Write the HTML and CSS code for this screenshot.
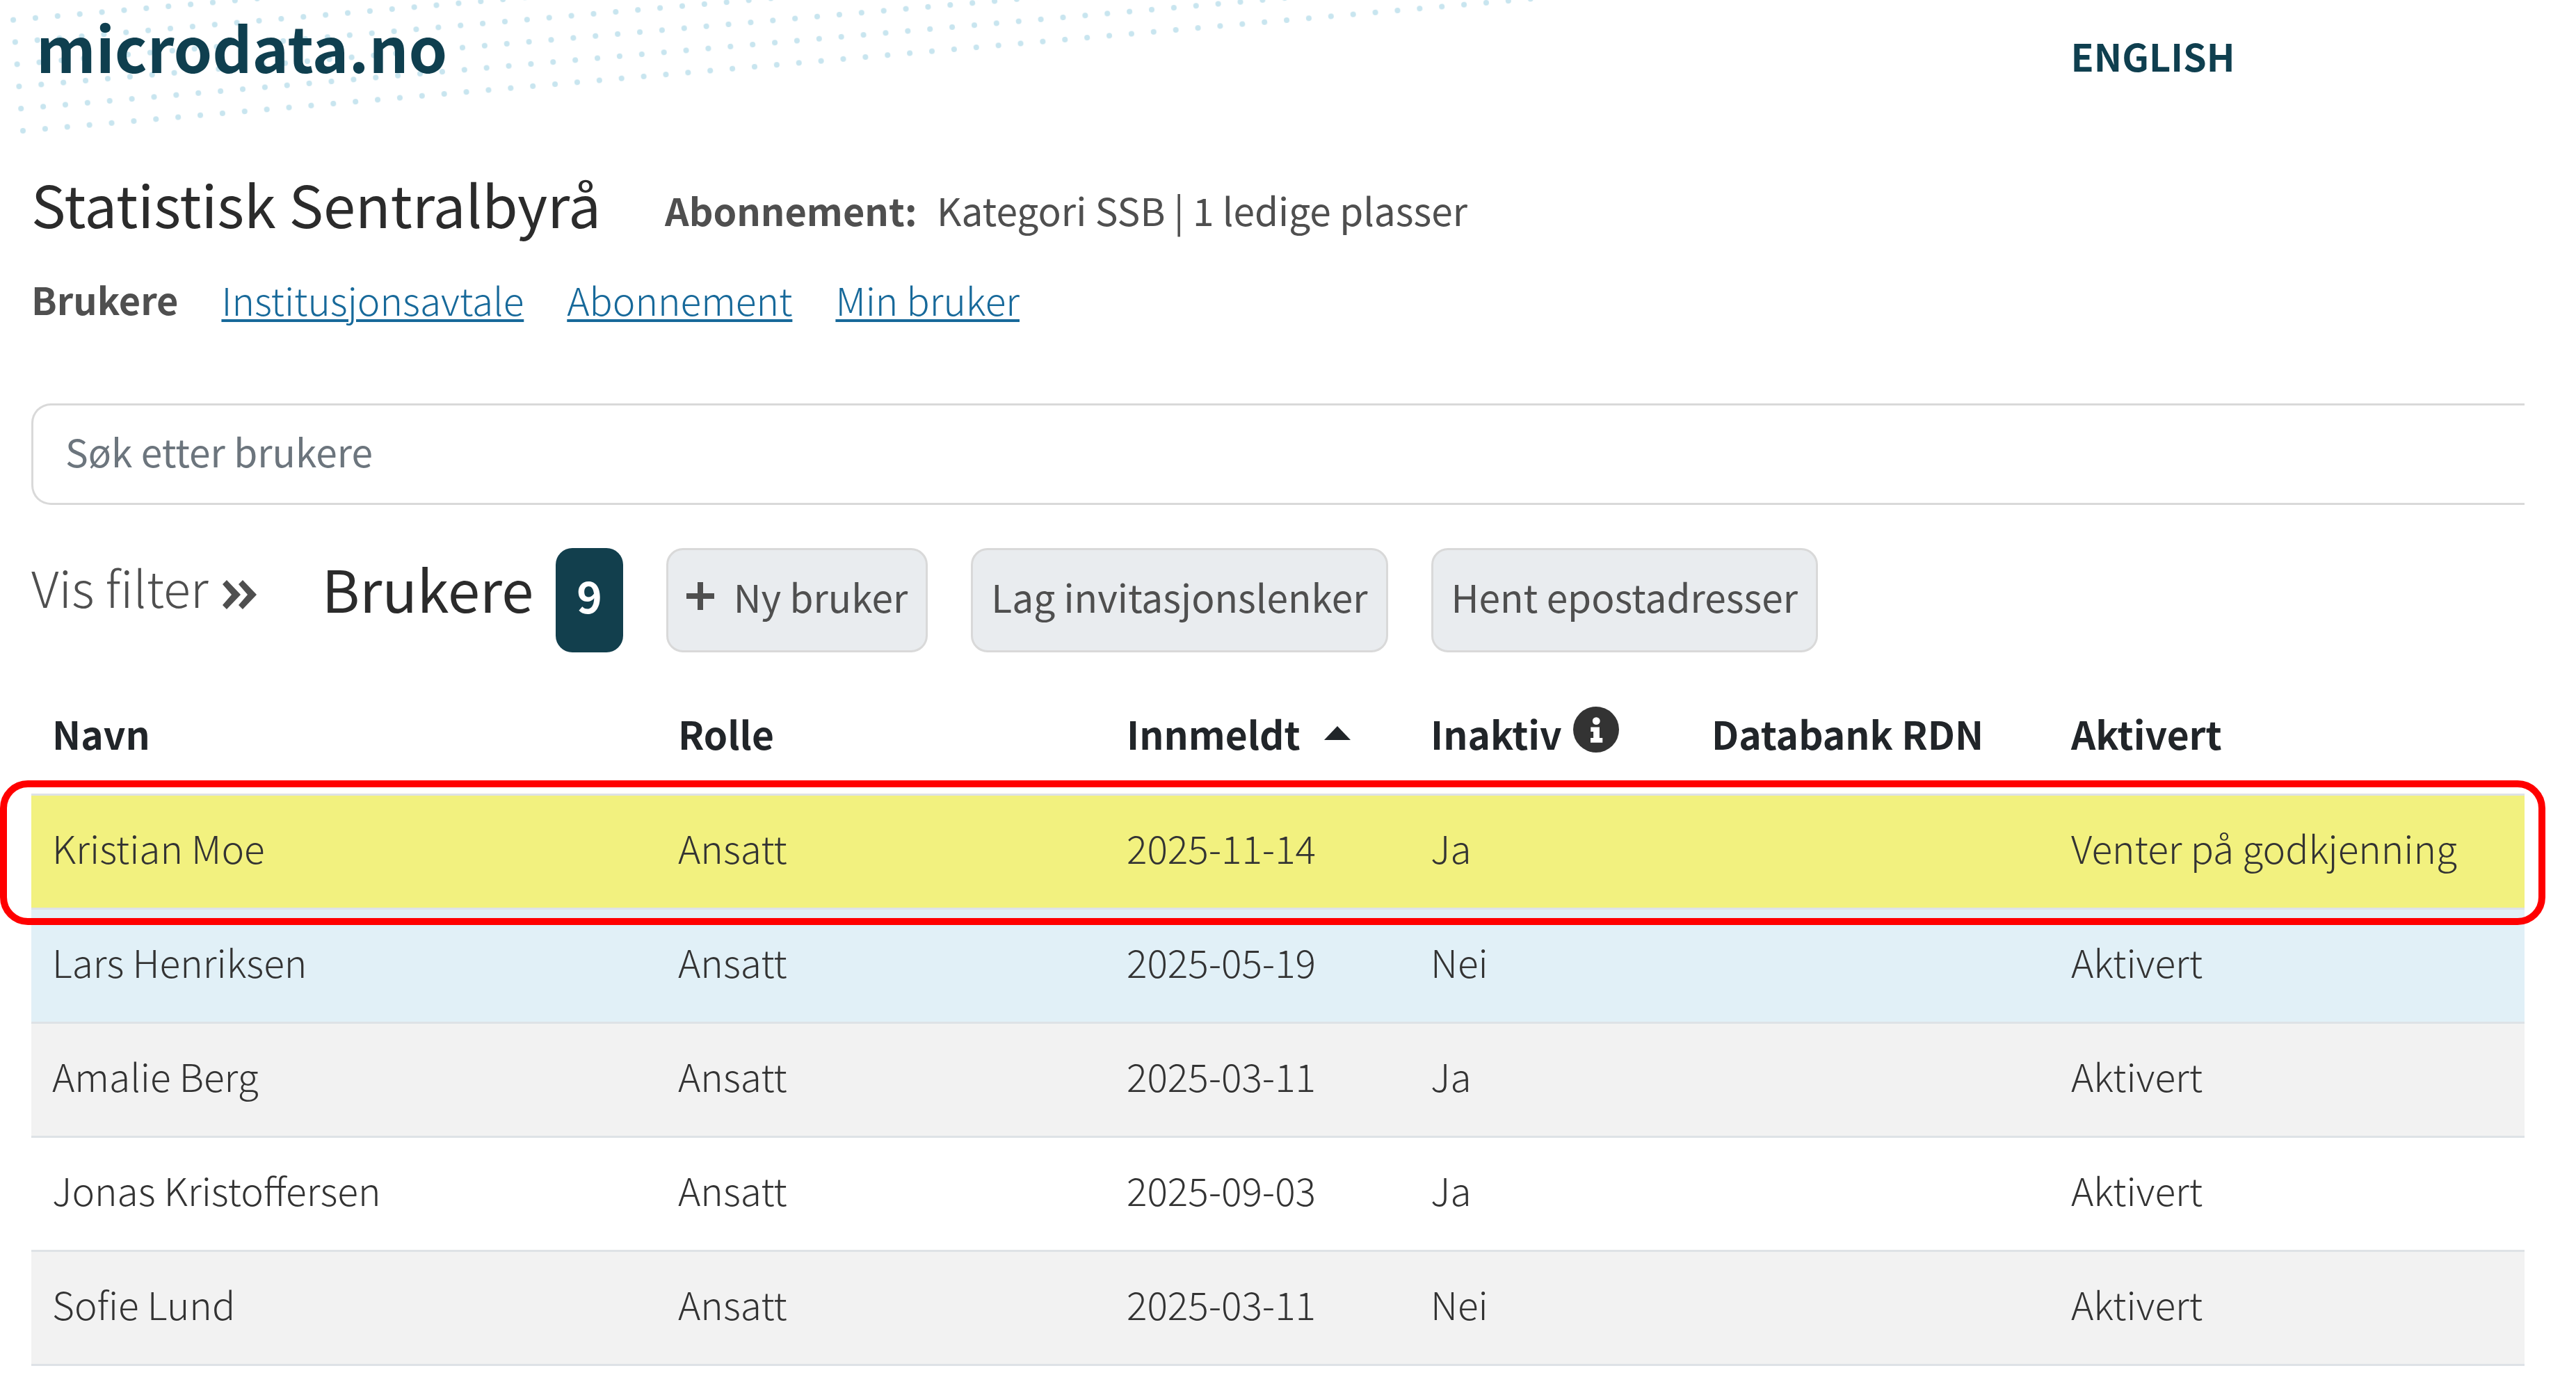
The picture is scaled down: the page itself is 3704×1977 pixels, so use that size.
FILE: index.html
```html
<!DOCTYPE html>
<html lang="no">
<head>
    <meta charset="UTF-8">
    <title>microdata.no - Brukere</title>
    <link rel="stylesheet" href="styles.css">
</head>
<body>

<svg class="dots" aria-hidden="true">
    <defs>
        <pattern id="dot" width="32" height="32" patternUnits="userSpaceOnUse" patternTransform="translate(-16 -16)">
            <circle cx="16" cy="16" r="4" fill="#c8e5ef"/>
        </pattern>
    </defs>
    <g transform="translate(33 188) rotate(-5)">
        <rect x="-16" y="-176" width="2400" height="192" fill="url(#dot)"/>
    </g>
</svg>

<header class="header">
    <a class="logo" href="#">microdata.no</a>
    <a class="language" href="#">ENGLISH</a>
</header>

<main class="content">
    <div class="institution">
        <h1>Statistisk Sentralbyrå</h1>
        <p class="subscription"><strong>Abonnement:</strong> <span>Kategori SSB | 1 ledige plasser</span></p>
    </div>

    <nav class="tabs">
        <strong>Brukere</strong>
        <a href="#">Institusjonsavtale</a>
        <a href="#">Abonnement</a>
        <a href="#">Min bruker</a>
    </nav>

    <input class="search" type="text" placeholder="Søk etter brukere" aria-label="Søk etter brukere">

    <div class="toolbar">
        <button class="filter-btn" type="button">Vis filter
            <svg class="chevrons" viewBox="0 0 49 42" aria-hidden="true"><path d="M0 6l6-6 20 21L6 42l-6-6 13-15zM23 6l6-6 20 21-20 21-6-6 13-15z"/></svg>
        </button>
        <h2>Brukere</h2>
        <span class="badge">9</span>
        <button class="btn" type="button">
            <svg class="plus" viewBox="0 0 40 40" aria-hidden="true"><path d="M20 0v40M0 20h40"/></svg>Ny bruker
        </button>
        <button class="btn" type="button">Lag invitasjonslenker</button>
        <button class="btn" type="button">Hent epostadresser</button>
    </div>

    <div class="table-wrap">
        <table class="users">
            <colgroup>
                <col class="col-name">
                <col class="col-role">
                <col class="col-date">
                <col class="col-inactive">
                <col class="col-rdn">
                <col>
            </colgroup>
            <thead>
                <tr>
                    <th>Navn</th>
                    <th>Rolle</th>
                    <th>Innmeldt <svg class="sort" viewBox="0 0 38 20" aria-hidden="true"><path d="M19 0l19 20H0z"/></svg></th>
                    <th>Inaktiv <svg class="info" viewBox="0 0 512 512" aria-hidden="true"><circle cx="256" cy="256" r="256"/><circle class="mark" cx="258" cy="160" r="42"/><path class="mark" d="M196 228h98v122h34v52H194v-52h32v-70h-30z"/></svg></th>
                    <th>Databank RDN</th>
                    <th>Aktivert</th>
                </tr>
            </thead>
            <tbody>
                <tr class="pending">
                    <td>Kristian Moe</td><td>Ansatt</td><td>2025-11-14</td><td>Ja</td><td></td><td>Venter på godkjenning</td>
                </tr>
                <tr class="selected">
                    <td>Lars Henriksen</td><td>Ansatt</td><td>2025-05-19</td><td>Nei</td><td></td><td>Aktivert</td>
                </tr>
                <tr class="odd">
                    <td>Amalie Berg</td><td>Ansatt</td><td>2025-03-11</td><td>Ja</td><td></td><td>Aktivert</td>
                </tr>
                <tr>
                    <td>Jonas Kristoffersen</td><td>Ansatt</td><td>2025-09-03</td><td>Ja</td><td></td><td>Aktivert</td>
                </tr>
                <tr class="odd">
                    <td>Sofie Lund</td><td>Ansatt</td><td>2025-03-11</td><td>Nei</td><td></td><td>Aktivert</td>
                </tr>
            </tbody>
        </table>
        <div class="marker"></div>
    </div>
</main>

</body>
</html>
```
FILE: styles.css
```css
* {
    box-sizing: border-box;
}

body {
    margin: 0;
    font-family: 'Noto Sans CJK JP', 'Noto Sans', sans-serif;
    font-size: 55px;
    font-weight: 300;
    line-height: 80px;
    color: #212529;
    background: #fff;
    overflow-x: hidden;
}

h1, h2, p {
    margin: 0;
}

h1, h2 {
    font-size: 83px;
    font-weight: 400;
    line-height: 100px;
    color: #2b2b2b;
}

strong {
    font-size: 54px;
    font-weight: 600;
}

/* dotted band behind the logo */
.dots {
    position: absolute;
    top: 0;
    left: 0;
    z-index: -1;
    width: 100%;
    height: 220px;
}

.header {
    display: grid;
    grid-template-columns: 4fr 1fr;
    column-gap: 20px;
    align-items: end;
    margin-bottom: 120px;
    padding: 14px 0 0 52px;
}

.header a {
    color: #0f3f4f;
    text-decoration: none;
}

.logo {
    font-size: 89px;
    font-weight: 600;
    line-height: 106px;
}

.language {
    font-size: 54px;
    font-weight: 600;
}

.content {
    padding: 0 74px 0 45px;
}

.institution {
    display: flex;
    align-items: flex-end;
    gap: 92px;
    padding-top: 2px;
}

.subscription {
    font-weight: 400;
    color: #4f4f4f;
}

.subscription span {
    margin-left: 16px;
}

.tabs {
    display: flex;
    gap: 62px;
    margin-top: 48px;
}

.tabs strong {
    color: #4f4f4f;
}

.tabs a {
    color: #17699a;
    text-decoration-thickness: 4px;
    text-underline-offset: 5px;
}

.search {
    display: block;
    width: 100%;
    height: 146px;
    margin-top: 110px;
    padding: 0 46px 10px;
    border: 3px solid #d9d9d9;
    border-right: 0;
    border-radius: 28px 0 0 28px;
    background: #fff;
    font: inherit;
    font-weight: 400;
}

.search::placeholder {
    color: #6c757d;
    opacity: 1;
}

.toolbar {
    display: flex;
    align-items: center;
    margin-top: 62px;
}

.filter-btn {
    display: flex;
    align-items: center;
    gap: 20px;
    margin-right: 94px;
    padding: 0 0 40px;
    border: 0;
    background: none;
    font: inherit;
    font-size: 72px;
    line-height: 100px;
    color: #4f4f4f;
}

.chevrons {
    width: 49px;
    height: 42px;
    margin-top: 24px;
    fill: #4f4f4f;
}

.toolbar h2 {
    padding-bottom: 36px;
}

.badge {
    margin-left: 32px;
    padding: 0 30px 16px;
    border-radius: 24px;
    background: #123f4d;
    font-size: 62px;
    font-weight: 700;
    line-height: 134px;
    color: #fff;
}

.btn {
    display: flex;
    align-items: center;
    height: 150px;
    margin-left: 62px;
    padding: 0 26px 12px;
    border: 3px solid #d9d9d9;
    border-radius: 24px;
    background: #e9ecef;
    font: inherit;
    font-weight: 400;
    color: #4f4f4f;
}

.plus {
    width: 40px;
    height: 40px;
    margin-right: 28px;
    stroke: #4f4f4f;
    stroke-width: 8;
}

.table-wrap {
    position: relative;
    margin-top: 42px;
}

.users {
    width: 100%;
    table-layout: fixed;
    border-spacing: 0;
}

.col-name { width: 900px; }
.col-role { width: 645px; }
.col-date { width: 437px; }
.col-inactive { width: 404px; }
.col-rdn { width: 517px; }

.users th,
.users td {
    height: 164px;
    padding: 0 0 14px 30px;
    border-bottom: 3px solid #dee2e6;
    text-align: left;
    white-space: nowrap;
}

.users th {
    font-weight: 700;
}

.users td {
    color: #333;
}

.pending td {
    background: #f2f17f;
}

.selected td {
    background: #e1f0f7;
}

.odd td {
    background: #f2f2f2;
}

.sort {
    width: 38px;
    height: 20px;
    margin: 0 0 14px 22px;
    fill: #212529;
}

.info {
    width: 66px;
    height: 66px;
    margin-left: 4px;
    vertical-align: -4px;
    fill: #333;
}

.info .mark {
    fill: #fff;
}

/* red frame around the row that waits for approval */
.marker {
    position: absolute;
    top: 142px;
    left: -45px;
    right: -30px;
    height: 208px;
    border: 10px solid #f00;
    border-radius: 40px;
}
```
